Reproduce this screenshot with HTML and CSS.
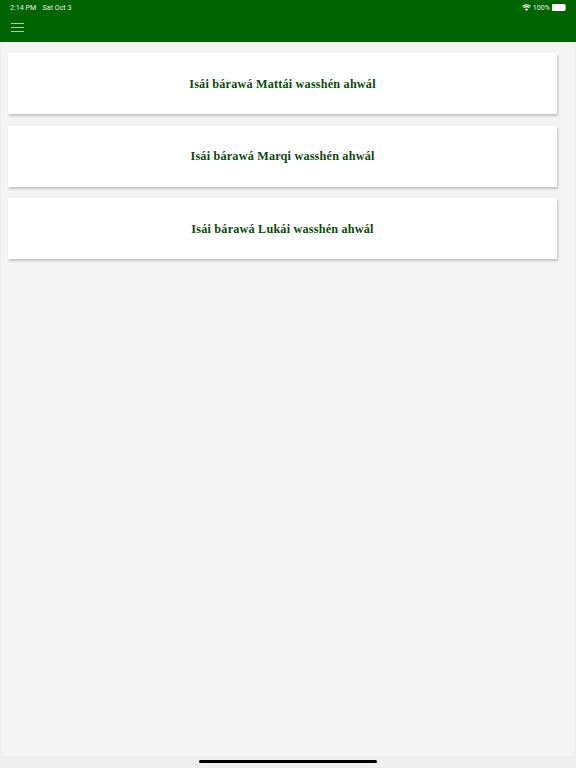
FILE: index.html
```html
<!DOCTYPE html>
<html>
<head>
    <meta charset="UTF-8">
    <title>Isái bárawá</title>
    <link rel="stylesheet" href="styles.css">
</head>
<body>
    <div class="header">
        <div class="status-bar">
            <span class="time">2:14 PM</span>
            <span class="date">Sat Oct 3</span>
            <span class="status-right">
                <svg class="wifi" width="9" height="7" viewBox="0 0 20 15"><path d="M10 15 L6.6 11.4 A5 5 0 0 1 13.4 11.4 Z M4.6 9.3 L2.7 7.3 A10.6 10.6 0 0 1 17.3 7.3 L15.4 9.3 A7.8 7.8 0 0 0 4.6 9.3 Z M1.3 5.8 L0 4.3 A14 14 0 0 1 20 4.3 L18.7 5.8 A12.4 12.4 0 0 0 1.3 5.8 Z" fill="#fff"/></svg>
                <span>100%</span>
                <span class="battery"><span class="battery-fill"></span></span>
            </span>
        </div>
        <div class="nav-bar">
            <svg class="menu" width="13" height="9" viewBox="0 0 13 9"><path d="M0 .5H13M0 4.5H13M0 8.5H13" stroke="#a9cfa9" stroke-width="1" fill="none"/></svg>
        </div>
    </div>

    <div class="content">
        <div class="list">
            <div class="card">Isái bárawá Mattái wasshén ahwál</div>
            <div class="card">Isái bárawá Marqi wasshén ahwál</div>
            <div class="card">Isái bárawá Lukái wasshén ahwál</div>
        </div>
    </div>

    <div class="bottom-bar">
        <div class="home-indicator"></div>
    </div>
</body>
</html>
```

FILE: styles.css
```css
html, body {
    height: 100%;
}
body {
    margin: 0;
    display: flex;
    flex-direction: column;
    background-color: #efefef;
    font-family: "Roboto", "Liberation Sans", sans-serif;
}
.header {
    background-color: #006400;
    color: #e6f0e6;
    height: 42px;
}
.status-bar {
    display: flex;
    align-items: center;
    height: 14px;
    padding: 0 10px;
    font-size: 7.1px;
}
.date {
    margin-left: 6.5px;
}
.status-right {
    margin-left: auto;
    display: flex;
    align-items: center;
    gap: 2px;
}
.battery {
    width: 14px;
    height: 7px;
    border-right: 1px solid #9fc49f;
    border-radius: 2px;
    box-sizing: border-box;
    display: block;
}
.battery-fill {
    display: block;
    height: 100%;
    border-radius: 1px;
    background-color: #fff;
}
.nav-bar {
    padding: 9px 11px 0;
}
.menu {
    display: block;
}
.content {
    flex: 1;
    margin: 0 1px;
    background-color: #f4f4f4;
}
.list {
    display: flex;
    flex-direction: column;
    gap: 11.5px;
    padding: 11px 18px 0 7px;
}
.card {
    height: 61px;
    box-sizing: border-box;
    padding-top: 1px;
    display: flex;
    align-items: center;
    justify-content: center;
    background-color: #fff;
    box-shadow: 1px 2px 2px rgba(0, 0, 0, 0.2);
    color: #0a4a0a;
    font-family: "Liberation Serif", serif;
    font-size: 12.2px;
    font-weight: bold;
    letter-spacing: 0.2px;
}
.bottom-bar {
    height: 12px;
    display: flex;
    justify-content: center;
    padding-top: 4px;
    box-sizing: border-box;
}
.home-indicator {
    width: 178px;
    height: 3px;
    background-color: #000;
    border-radius: 2px;
}
```
